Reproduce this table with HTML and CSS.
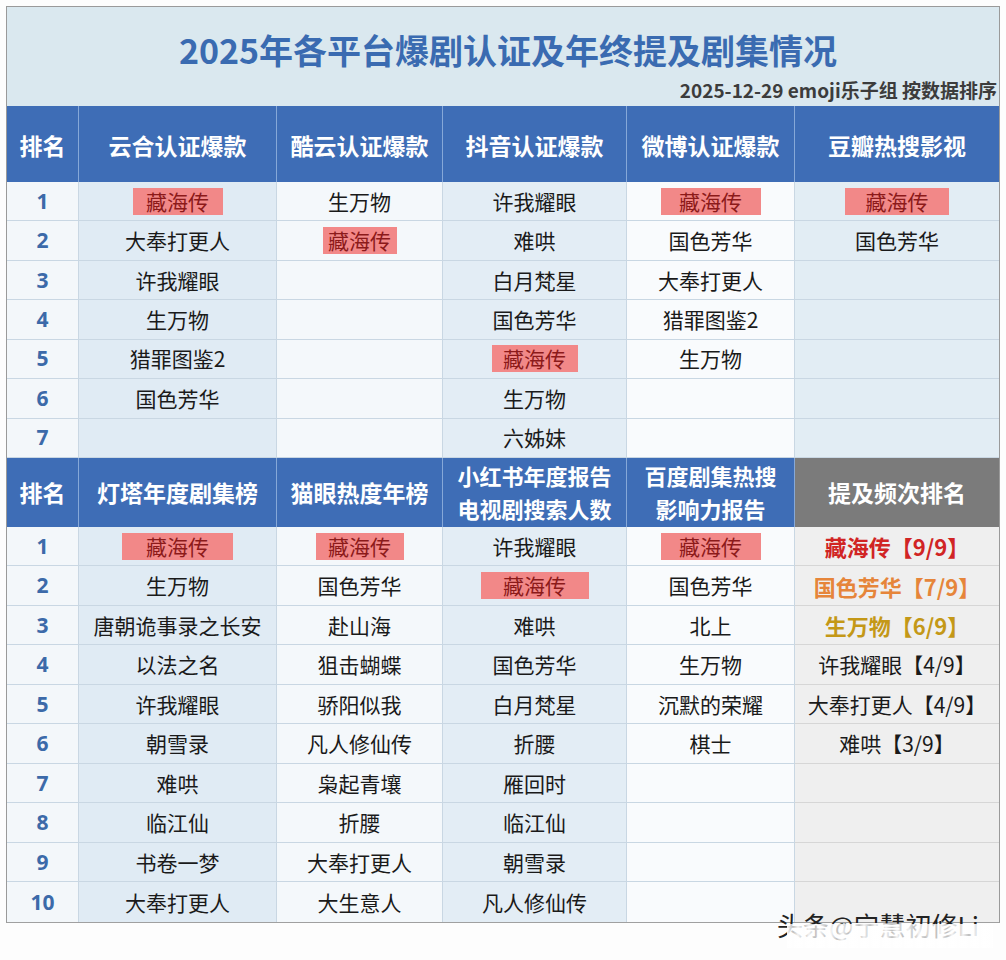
FILE: index.html
```html
<!DOCTYPE html>
<html lang="zh">
<head>
<meta charset="utf-8">
<link rel="stylesheet" href="styles.css">
</head>
<body>
<div class="page">
  <div class="sheet">
    <div class="title-block">
      <h1 class="title">2025年各平台爆剧认证及年终提及剧集情况</h1>
      <div class="sub">2025-12-29 emoji乐子组 按数据排序</div>
    </div>

    <div class="grid top">
      <div class="h">排名</div>
      <div class="h">云合认证爆款</div>
      <div class="h">酷云认证爆款</div>
      <div class="h">抖音认证爆款</div>
      <div class="h">微博认证爆款</div>
      <div class="h">豆瓣热搜影视</div>

      <div class="n">1</div>
      <div><span class="hl w90">藏海传</span></div>
      <div>生万物</div>
      <div>许我耀眼</div>
      <div><span class="hl w100">藏海传</span></div>
      <div><span class="hl w104">藏海传</span></div>

      <div class="n">2</div>
      <div>大奉打更人</div>
      <div><span class="hl w74">藏海传</span></div>
      <div>难哄</div>
      <div>国色芳华</div>
      <div>国色芳华</div>

      <div class="n">3</div>
      <div>许我耀眼</div>
      <div></div>
      <div>白月梵星</div>
      <div>大奉打更人</div>
      <div></div>

      <div class="n">4</div>
      <div>生万物</div>
      <div></div>
      <div>国色芳华</div>
      <div>猎罪图鉴2</div>
      <div></div>

      <div class="n">5</div>
      <div>猎罪图鉴2</div>
      <div></div>
      <div><span class="hl w86">藏海传</span></div>
      <div>生万物</div>
      <div></div>

      <div class="n">6</div>
      <div>国色芳华</div>
      <div></div>
      <div>生万物</div>
      <div></div>
      <div></div>

      <div class="n">7</div>
      <div></div>
      <div></div>
      <div>六姊妹</div>
      <div></div>
      <div></div>
    </div>

    <div class="grid bottom">
      <div class="h h2">排名</div>
      <div class="h h2">灯塔年度剧集榜</div>
      <div class="h h2">猫眼热度年榜</div>
      <div class="h h2 two">小红书年度报告<br>电视剧搜索人数</div>
      <div class="h h2 two">百度剧集热搜<br>影响力报告</div>
      <div class="h h2 gray">提及频次排名</div>

      <div class="n">1</div>
      <div><span class="hl w111">藏海传</span></div>
      <div><span class="hl w88">藏海传</span></div>
      <div>许我耀眼</div>
      <div><span class="hl w100">藏海传</span></div>
      <div class="rank r1">藏海传【9/9】</div>

      <div class="n">2</div>
      <div>生万物</div>
      <div>国色芳华</div>
      <div><span class="hl w108">藏海传</span></div>
      <div>国色芳华</div>
      <div class="rank r2">国色芳华【7/9】</div>

      <div class="n">3</div>
      <div>唐朝诡事录之长安</div>
      <div>赴山海</div>
      <div>难哄</div>
      <div>北上</div>
      <div class="rank r3">生万物【6/9】</div>

      <div class="n">4</div>
      <div>以法之名</div>
      <div>狙击蝴蝶</div>
      <div>国色芳华</div>
      <div>生万物</div>
      <div>许我耀眼【4/9】</div>

      <div class="n">5</div>
      <div>许我耀眼</div>
      <div>骄阳似我</div>
      <div>白月梵星</div>
      <div>沉默的荣耀</div>
      <div>大奉打更人【4/9】</div>

      <div class="n">6</div>
      <div>朝雪录</div>
      <div>凡人修仙传</div>
      <div>折腰</div>
      <div>棋士</div>
      <div>难哄【3/9】</div>

      <div class="n">7</div>
      <div>难哄</div>
      <div>枭起青壤</div>
      <div>雁回时</div>
      <div></div>
      <div></div>

      <div class="n">8</div>
      <div>临江仙</div>
      <div>折腰</div>
      <div>临江仙</div>
      <div></div>
      <div></div>

      <div class="n">9</div>
      <div>书卷一梦</div>
      <div>大奉打更人</div>
      <div>朝雪录</div>
      <div></div>
      <div></div>

      <div class="n">10</div>
      <div>大奉打更人</div>
      <div>大生意人</div>
      <div>凡人修仙传</div>
      <div></div>
      <div></div>
    </div>
  </div>
  <div class="footer">
    <div class="mark">头条@宁慧初修Li<span class="smear"></span></div>
  </div>
</div>
</body>
</html>
```

FILE: styles.css
```css
* { box-sizing: border-box; }
html, body { margin: 0; padding: 0; background: #ffffff; }
body {
  font-family: "Noto Sans CJK SC", "Noto Sans", sans-serif;
  color: #1a1a1a;
}
.page {
  width: 1006px;
  height: 960px;
  padding: 6px 6px 0 6px;
  background: #fdfdfd;
}
.sheet {
  width: 994px;
  border: 1px solid #9a9a9a;
  border-bottom-color: #a0a0a0;
}
.title-block {
  height: 99px;
  background: #dae8ef;
  display: flex;
  flex-direction: column;
  align-items: center;
}
.title {
  margin: 22px 0 0 0;
  font-size: 34px;
  line-height: 42px;
  font-weight: 700;
  color: #3a6bb1;
  padding-left: 10px;
}
.sub {
  align-self: flex-end;
  margin-top: 7px;
  margin-right: 2px;
  font-size: 19px;
  line-height: 24px;
  font-weight: 700;
  color: #3c3c3c;
}
.grid {
  display: grid;
  grid-template-columns: 72px 198px 166px 184px 168px 204px;
}
.top { grid-template-rows: 76px repeat(7, 39.43px); }
.bottom { grid-template-rows: 69px repeat(10, 39.5px); }

.grid > div {
  display: flex;
  align-items: center;
  justify-content: center;
  font-size: 21px;
  line-height: 1;
  border-bottom: 1px solid #c9d7e3;
  border-right: 1px solid #c9d7e3;
  white-space: nowrap;
}
.grid > div:nth-child(6n+1) { background: #f3f7fa; }
.grid > div:nth-child(6n+2) { background: #e0ebf4; }
.grid > div:nth-child(6n+3) { background: #f4f8fb; }
.grid > div:nth-child(6n+4) { background: #e3edf5; }
.grid > div:nth-child(6n+5) { background: #f9fbfd; }
.grid > div:nth-child(6n) { background: #e2edf4; border-right: none; }
.bottom > div:nth-child(6n) { background: #efefef; border-bottom-color: #d6d6d6; }
.bottom > div:nth-last-child(-n+6) { border-bottom: none; }

.grid > div.h {
  background: #3e6db6;
  color: #ffffff;
  font-weight: 700;
  font-size: 23px;
  border-right: 1px solid #86a8d8;
  border-bottom: none;
}
.grid > div.h:nth-child(6) { border-right: none; }
.top > div.h { padding-top: 2px; }
.grid > div.h.two { line-height: 33px; text-align: center; font-size: 22px; }
.grid > div.h.gray { background: #7b7b7b; }

.grid > div.n {
  color: #3c6aa9;
  font-family: "Open Sans", "Noto Sans", sans-serif;
  font-weight: 700;
  font-size: 21px;
}

.hl {
  display: inline-flex;
  align-items: center;
  justify-content: center;
  height: 27px;
  background: #f28888;
  color: #8c1a1a;
}
.w74 { width: 74px; }
.w86 { width: 86px; }
.w88 { width: 88px; }
.w90 { width: 90px; }
.w100 { width: 100px; }
.w104 { width: 104px; }
.w108 { width: 108px; }
.w111 { width: 111px; }

.grid > div.rank { font-weight: 700; font-size: 22px; }
.r1 { color: #d12424; }
.r2 { color: #e6853a; }
.r3 { color: #c49817; }

.footer {
  height: 37px;
  position: relative;
}
.mark {
  position: absolute;
  left: 771px;
  top: -13px;
  font-size: 26px;
  line-height: 30px;
  color: #222222;
}
.smear {
  position: absolute;
  left: 10px;
  right: -14px;
  top: 14px;
  height: 24px;
  background: repeating-linear-gradient(90deg, rgba(255,255,255,0.95) 0px, rgba(255,255,255,0.7) 6px, rgba(255,255,255,0.95) 11px);
}
```
